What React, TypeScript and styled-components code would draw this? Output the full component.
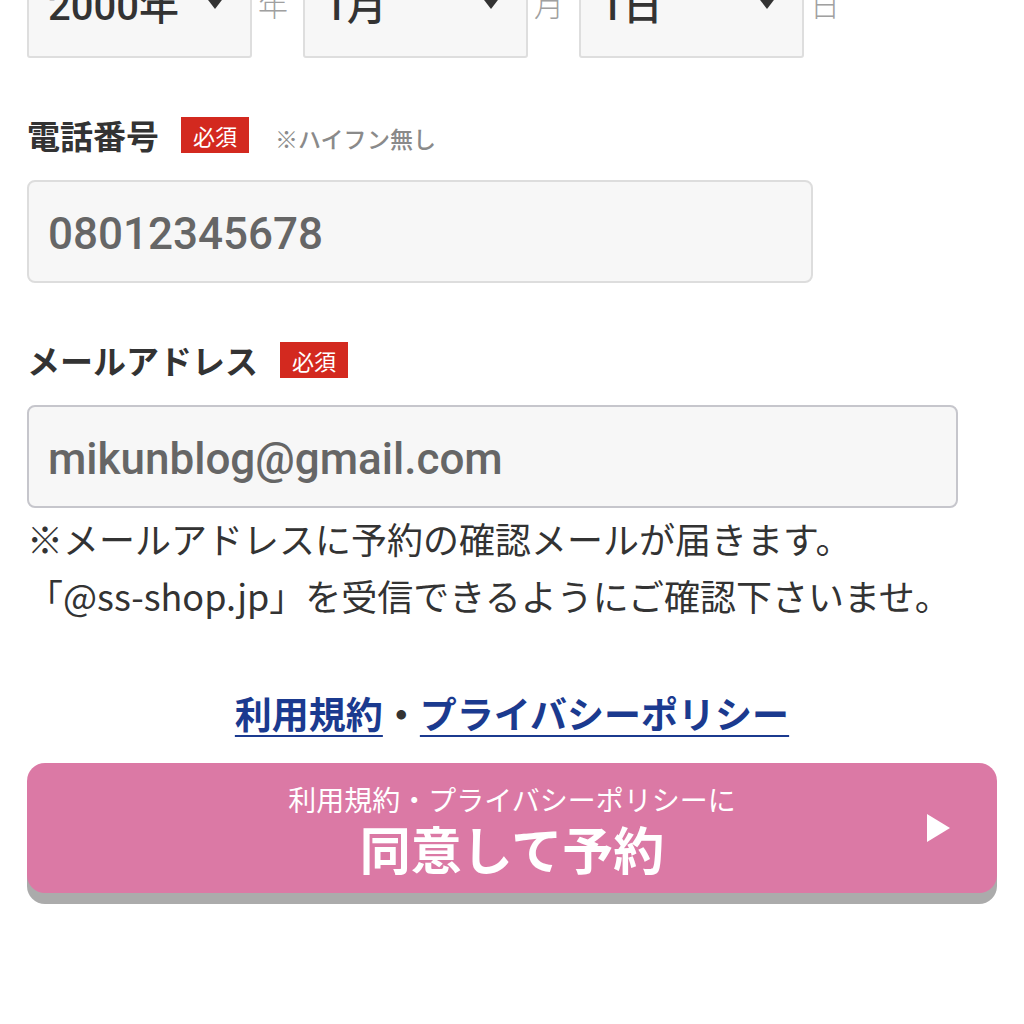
import React from "react"
import styled, { createGlobalStyle } from "styled-components"

const GlobalStyle = createGlobalStyle`
  html, body {
    margin: 0;
    background: #ffffff;
  }
  body {
    font-family: "Noto Sans CJK JP", sans-serif;
    color: #333333;
  }
`

const dates = [
  { value: "2000年", unit: "年" },
  { value: "1月", unit: "月" },
  { value: "1日", unit: "日" },
]

const ArrowDown = () => (
  <svg width="20" height="13" viewBox="0 0 20 13">
    <path d="M0 0 L20 0 L10 13 Z" fill="#333333" />
  </svg>
)

const App = () => {
  return (
    <>
      <GlobalStyle />
      <Page>
        <DateRow>
          {dates.map((d) => (
            <React.Fragment key={d.unit}>
              <Select>
                <span>{d.value}</span>
                <ArrowDown />
              </Select>
              <Unit>{d.unit}</Unit>
            </React.Fragment>
          ))}
        </DateRow>

        <LabelRow>
          <Label>{"電話番号"}</Label>
          <Badge>{"必須"}</Badge>
          <Hint>{"※ハイフン無し"}</Hint>
        </LabelRow>
        <Input width={786}>{"08012345678"}</Input>

        <LabelRow>
          <Label>{"メールアドレス"}</Label>
          <Badge>{"必須"}</Badge>
        </LabelRow>
        <Input width={931} focused>
          {"mikunblog@gmail.com"}
        </Input>

        <Note>
          {"※メールアドレスに予約の確認メールが届きます。"}
          <br />
          {"「@ss-shop.jp」を受信できるようにご確認下さいませ。"}
        </Note>

        <Links>
          <Link>{"利用規約"}</Link>
          <Separator>{"・"}</Separator>
          <Link>{"プライバシーポリシー"}</Link>
        </Links>

        <SubmitButton>
          <span />
          <ButtonText>
            <ButtonSub>{"利用規約・プライバシーポリシーに"}</ButtonSub>
            <ButtonMain>{"同意して予約"}</ButtonMain>
          </ButtonText>
          <PlayIcon width="23" height="28" viewBox="0 0 23 28">
            <path d="M0 0 L23 14 L0 28 Z" fill="#ffffff" />
          </PlayIcon>
        </SubmitButton>
      </Page>
    </>
  )
}

export default App

const Page = styled.div`
  width: 1024px;
  height: 1024px;
  box-sizing: border-box;
  padding: 0 27px;
  overflow: hidden;
`

const DateRow = styled.div`
  display: flex;
  align-items: center;
  height: 103px;
  margin-top: -45px;
`

const Select = styled.div`
  width: 225px;
  height: 103px;
  box-sizing: border-box;
  display: flex;
  align-items: center;
  justify-content: space-between;
  padding: 0 25px 8px 19px;
  background: #f7f7f7;
  border: 2px solid #dedede;
  border-radius: 3px;
  font-family: Roboto, "Noto Sans CJK JP", sans-serif;
  font-size: 40px;
  font-weight: 500;
  color: #333333;
`

const Unit = styled.span`
  font-size: 30px;
  font-weight: 300;
  color: #a0a0a0;
  margin: 0 15px 0 6px;
  padding-bottom: 8px;
`

const LabelRow = styled.div`
  display: flex;
  align-items: center;
  height: 36px;
  margin-top: 59px;
`

const Label = styled.span`
  font-size: 33px;
  font-weight: 700;
  line-height: 36px;
  color: #333333;
`

const Badge = styled.span`
  display: flex;
  align-items: center;
  height: 36px;
  padding: 0 12px;
  margin-left: 22px;
  background: #d3291f;
  color: #ffffff;
  font-size: 22px;
  line-height: 1;
`

const Hint = styled.span`
  margin-left: 26px;
  margin-top: 6px;
  font-size: 23px;
  font-weight: 500;
  color: #8a8a8a;
`

const Input = styled.div<{ width: number; focused?: boolean }>`
  width: ${(props) => props.width}px;
  height: 103px;
  box-sizing: border-box;
  margin-top: 27px;
  display: flex;
  align-items: center;
  padding: 5px 19px 0;
  background: #f7f7f7;
  border: 2px solid ${(props) => (props.focused ? "#c6c6cc" : "#dddddd")};
  border-radius: 8px;
  font-family: Roboto, sans-serif;
  font-size: 44px;
  font-weight: 500;
  color: #666666;
`

const Note = styled.p`
  margin: 2px 0 0;
  font-size: 36px;
  line-height: 57px;
  color: #333333;
  white-space: nowrap;
`

const Links = styled.div`
  margin-top: 65px;
  text-align: center;
  font-size: 37px;
  font-weight: 700;
  line-height: 48px;
`

const Link = styled.a`
  color: #1b3a8f;
  text-decoration: underline;
  text-decoration-thickness: 2px;
  text-underline-offset: 6px;
`

const Separator = styled.span`
  color: #333333;
`

const SubmitButton = styled.div`
  margin-top: 26px;
  width: 970px;
  height: 130px;
  box-sizing: border-box;
  padding-top: 4px;
  display: grid;
  grid-template-columns: 1fr auto 1fr;
  align-items: center;
  background: #db79a5;
  border-radius: 18px;
  box-shadow: 0 11px 0 #ababab;
  color: #ffffff;
`

const ButtonText = styled.div`
  display: flex;
  flex-direction: column;
  align-items: center;
  gap: 2px;
`

const ButtonSub = styled.span`
  font-size: 28px;
  line-height: 34px;
`

const ButtonMain = styled.span`
  font-size: 51px;
  font-weight: 700;
  line-height: 60px;
`

const PlayIcon = styled.svg`
  justify-self: end;
  margin-right: 47px;
  margin-top: -4px;
`
